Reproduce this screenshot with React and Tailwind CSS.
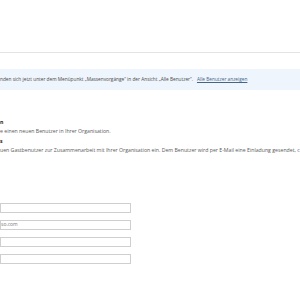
export default function App() {
  const font = { fontFamily: '"Open Sans", "Noto Sans", sans-serif' };
  return (
    <div className="w-[300px] h-[300px] overflow-hidden bg-white" style={font}>
      <div className="h-[53px] border-b border-[#e3e3e3]" />
      <div className="mt-[16px] h-[21px] bg-[#eff5fc] flex items-center whitespace-nowrap text-[4.75px] text-[#4a4a4a]">
        <span>nden sich jetzt unter dem Menüpunkt „Massenvorgänge“ in der Ansicht „Alle Benutzer“.</span>
        <span className="ml-[4px] underline text-[#46648a]">Alle Benutzer anzeigen</span>
      </div>
      <div className="mt-[28px] whitespace-nowrap text-[5.2px] leading-[9px]">
        <div className="font-bold text-[#222]">n</div>
        <div className="text-[#5a5a5a]">e einen neuen Benutzer in Ihrer Organisation.</div>
        <div className="font-bold text-[#222] mt-[1px]">s</div>
        <div className="text-[#5a5a5a]">uen Gastbenutzer zur Zusammenarbeit mit Ihrer Organisation ein. Dem Benutzer wird per E-Mail eine Einladung gesendet, c</div>
      </div>
      <div className="mt-[48px] flex flex-col gap-[7px] w-[131px]">
        <div className="h-[10px] border border-[#cfcfcf] bg-white" />
        <div className="h-[10px] border border-[#cfcfcf] bg-white flex items-center text-[5px] text-[#777] whitespace-nowrap">so.com</div>
        <div className="h-[10px] border border-[#cfcfcf] bg-white" />
        <div className="h-[10px] border border-[#cfcfcf] bg-white" />
      </div>
    </div>
  );
}
